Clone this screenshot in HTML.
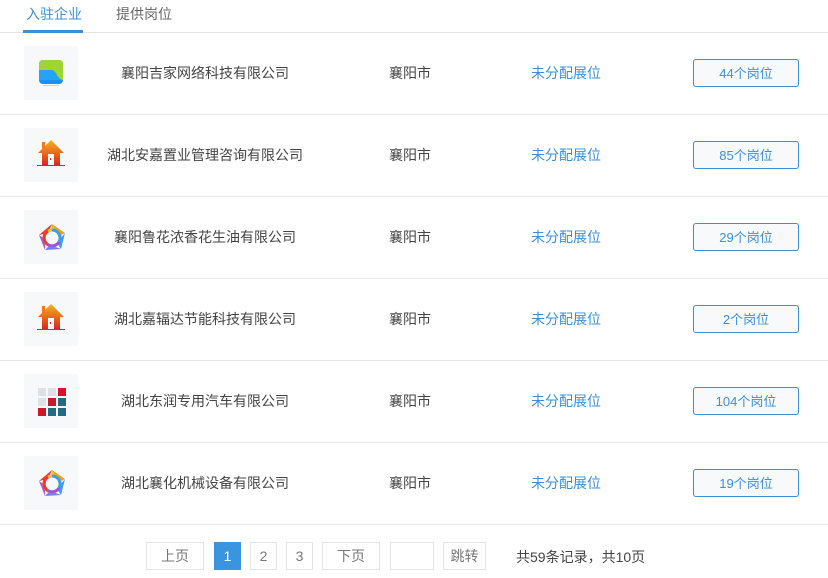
<!DOCTYPE html>
<html><head><meta charset="utf-8">
<style>
*{margin:0;padding:0;box-sizing:border-box}
body{width:828px;height:578px;background:#fff;font-family:"Liberation Sans","Noto Sans CJK SC",sans-serif;font-size:14px;color:#444;position:relative;overflow:hidden}
.abs{position:absolute}
.tab{top:4px;font-size:14px}
.row{position:absolute;left:0;width:828px;height:82px;border-bottom:1px solid #e8e8e8}
.logo{position:absolute;left:24px;top:13px;width:54px;height:54px;background:#f7f8fa}
.name{position:absolute;left:80px;width:250px;text-align:center;top:30px}
.city{position:absolute;left:370px;width:80px;text-align:center;top:30px}
.stat{position:absolute;left:520px;width:92px;text-align:center;top:30px;color:#3a8fd8}
.btn{position:absolute;left:693px;top:26px;width:106px;height:28px;border:1px solid #3a8fd8;border-radius:3px;background:#f7f9fb;color:#3a8fd8;text-align:center;line-height:27px;font-size:13px}
.pg{position:absolute;top:542px;height:28px;border:1px solid #e3e3e3;text-align:center;line-height:26px;color:#777;font-size:14px}
</style></head><body>
<svg width="0" height="0" style="position:absolute"><defs><linearGradient id="h" x1="0" y1="0" x2="0" y2="1"><stop offset="0" stop-color="#f8b21c"/><stop offset="1" stop-color="#d9281c"/></linearGradient></defs></svg>
<div class="abs tab" style="left:26px;color:#3a8fd8">入驻企业</div>
<div class="abs tab" style="left:116px;color:#666">提供岗位</div>
<div class="abs" style="left:0;top:32px;width:828px;height:1px;background:#e3e3e3"></div>
<div class="abs" style="left:23px;top:30px;width:60px;height:3px;background:#3a8fd8"></div>

<div class="row" style="top:33px">
 <div class="logo"><svg class="abs" style="left:15px;top:14px" width="24" height="26" viewBox="0 0 24 26"><rect x="0" y="0" width="24" height="24" rx="4" fill="#1e8ff0"/><path d="M4 0h16a4 4 0 0 1 4 4v16c-6 0-6-10-12-10H0V4a4 4 0 0 1 4-4z" fill="#9cd534"/><path d="M0 10h12c6 0 6 10 12 10v0H0z" fill="#23a4f6"/><rect x="4" y="25" width="16" height="1" fill="#f3c9a0"/></svg></div>
 <div class="name">襄阳吉家网络科技有限公司</div><div class="city">襄阳市</div><div class="stat">未分配展位</div><div class="btn">44个岗位</div>
</div>
<div class="row" style="top:115px">
 <div class="logo"><svg class="abs" style="left:11px;top:9px" width="32" height="30" viewBox="0 0 32 30"><path d="M16 3L3 16h4v12h18V16h4z" fill="url(#h)"/><rect x="7" y="5" width="3" height="7" fill="#f07a1c"/><rect x="13" y="17" width="6" height="11" fill="#fff"/><rect x="15" y="21" width="1" height="2" fill="#d9281c"/><rect x="2" y="28" width="28" height="1" fill="#d9281c"/></svg></div>
 <div class="name">湖北安嘉置业管理咨询有限公司</div><div class="city">襄阳市</div><div class="stat">未分配展位</div><div class="btn">85个岗位</div>
</div>
<div class="row" style="top:197px">
 <div class="logo"><svg class="abs" style="left:12px;top:12px" width="32" height="32" viewBox="0 0 32 32"><path d="M16 2L22 8L15 9Z" fill="#f2c21c"/><path d="M16 2L29 11L23 14Z" fill="#f0a020"/><path d="M29 11L25 27L21 21Z" fill="#3a9ef0"/><path d="M25 27L9 28L14 23Z" fill="#6a7ef0"/><path d="M9 28L3 13L9 17Z" fill="#b050e0"/><path d="M3 13L16 2L12 11Z" fill="#e83a2a"/><circle cx="16" cy="16" r="8" fill="none" stroke="#f0c020" stroke-width="3"/><path d="M16 8a8 8 0 0 1 7 12" fill="none" stroke="#3a9ef0" stroke-width="3"/><path d="M23 20a8 8 0 0 1-12 2" fill="none" stroke="#a050e0" stroke-width="3"/><path d="M11 22a8 8 0 0 1 1-13" fill="none" stroke="#e83a2a" stroke-width="3"/></svg></div>
 <div class="name">襄阳鲁花浓香花生油有限公司</div><div class="city">襄阳市</div><div class="stat">未分配展位</div><div class="btn">29个岗位</div>
</div>
<div class="row" style="top:279px">
 <div class="logo"><svg class="abs" style="left:11px;top:9px" width="32" height="30" viewBox="0 0 32 30"><path d="M16 3L3 16h4v12h18V16h4z" fill="url(#h)"/><rect x="7" y="5" width="3" height="7" fill="#f07a1c"/><rect x="13" y="17" width="6" height="11" fill="#fff"/><rect x="15" y="21" width="1" height="2" fill="#d9281c"/><rect x="2" y="28" width="28" height="1" fill="#d9281c"/></svg></div>
 <div class="name">湖北嘉辐达节能科技有限公司</div><div class="city">襄阳市</div><div class="stat">未分配展位</div><div class="btn">2个岗位</div>
</div>
<div class="row" style="top:361px">
 <div class="logo"><svg class="abs" style="left:14px;top:14px" width="28" height="28" viewBox="0 0 28 28"><rect x="0" y="0" width="8" height="8" fill="#dde0e6"/><rect x="10" y="0" width="8" height="8" fill="#dde0e6"/><rect x="20" y="0" width="8" height="8" fill="#d0142c"/><rect x="0" y="10" width="8" height="8" fill="#dde0e6"/><rect x="10" y="10" width="8" height="8" fill="#d0142c"/><rect x="20" y="10" width="8" height="8" fill="#236a86"/><rect x="0" y="20" width="8" height="8" fill="#d0142c"/><rect x="10" y="20" width="8" height="8" fill="#236a86"/><rect x="20" y="20" width="8" height="8" fill="#236a86"/></svg></div>
 <div class="name">湖北东润专用汽车有限公司</div><div class="city">襄阳市</div><div class="stat">未分配展位</div><div class="btn">104个岗位</div>
</div>
<div class="row" style="top:443px">
 <div class="logo"><svg class="abs" style="left:12px;top:12px" width="32" height="32" viewBox="0 0 32 32"><path d="M16 2L22 8L15 9Z" fill="#f2c21c"/><path d="M16 2L29 11L23 14Z" fill="#f0a020"/><path d="M29 11L25 27L21 21Z" fill="#3a9ef0"/><path d="M25 27L9 28L14 23Z" fill="#6a7ef0"/><path d="M9 28L3 13L9 17Z" fill="#b050e0"/><path d="M3 13L16 2L12 11Z" fill="#e83a2a"/><circle cx="16" cy="16" r="8" fill="none" stroke="#f0c020" stroke-width="3"/><path d="M16 8a8 8 0 0 1 7 12" fill="none" stroke="#3a9ef0" stroke-width="3"/><path d="M23 20a8 8 0 0 1-12 2" fill="none" stroke="#a050e0" stroke-width="3"/><path d="M11 22a8 8 0 0 1 1-13" fill="none" stroke="#e83a2a" stroke-width="3"/></svg></div>
 <div class="name">湖北襄化机械设备有限公司</div><div class="city">襄阳市</div><div class="stat">未分配展位</div><div class="btn">19个岗位</div>
</div>

<div class="pg" style="left:146px;width:58px">上页</div>
<div class="pg" style="left:214px;width:27px;background:#3a95e0;border-color:#3a95e0;color:#fff">1</div>
<div class="pg" style="left:250px;width:27px">2</div>
<div class="pg" style="left:286px;width:27px">3</div>
<div class="pg" style="left:322px;width:58px">下页</div>
<div class="pg" style="left:390px;width:44px"></div>
<div class="pg" style="left:443px;width:43px">跳转</div>
<div class="abs" style="left:516px;top:547px;color:#444">共59条记录，共10页</div>
</body></html>
